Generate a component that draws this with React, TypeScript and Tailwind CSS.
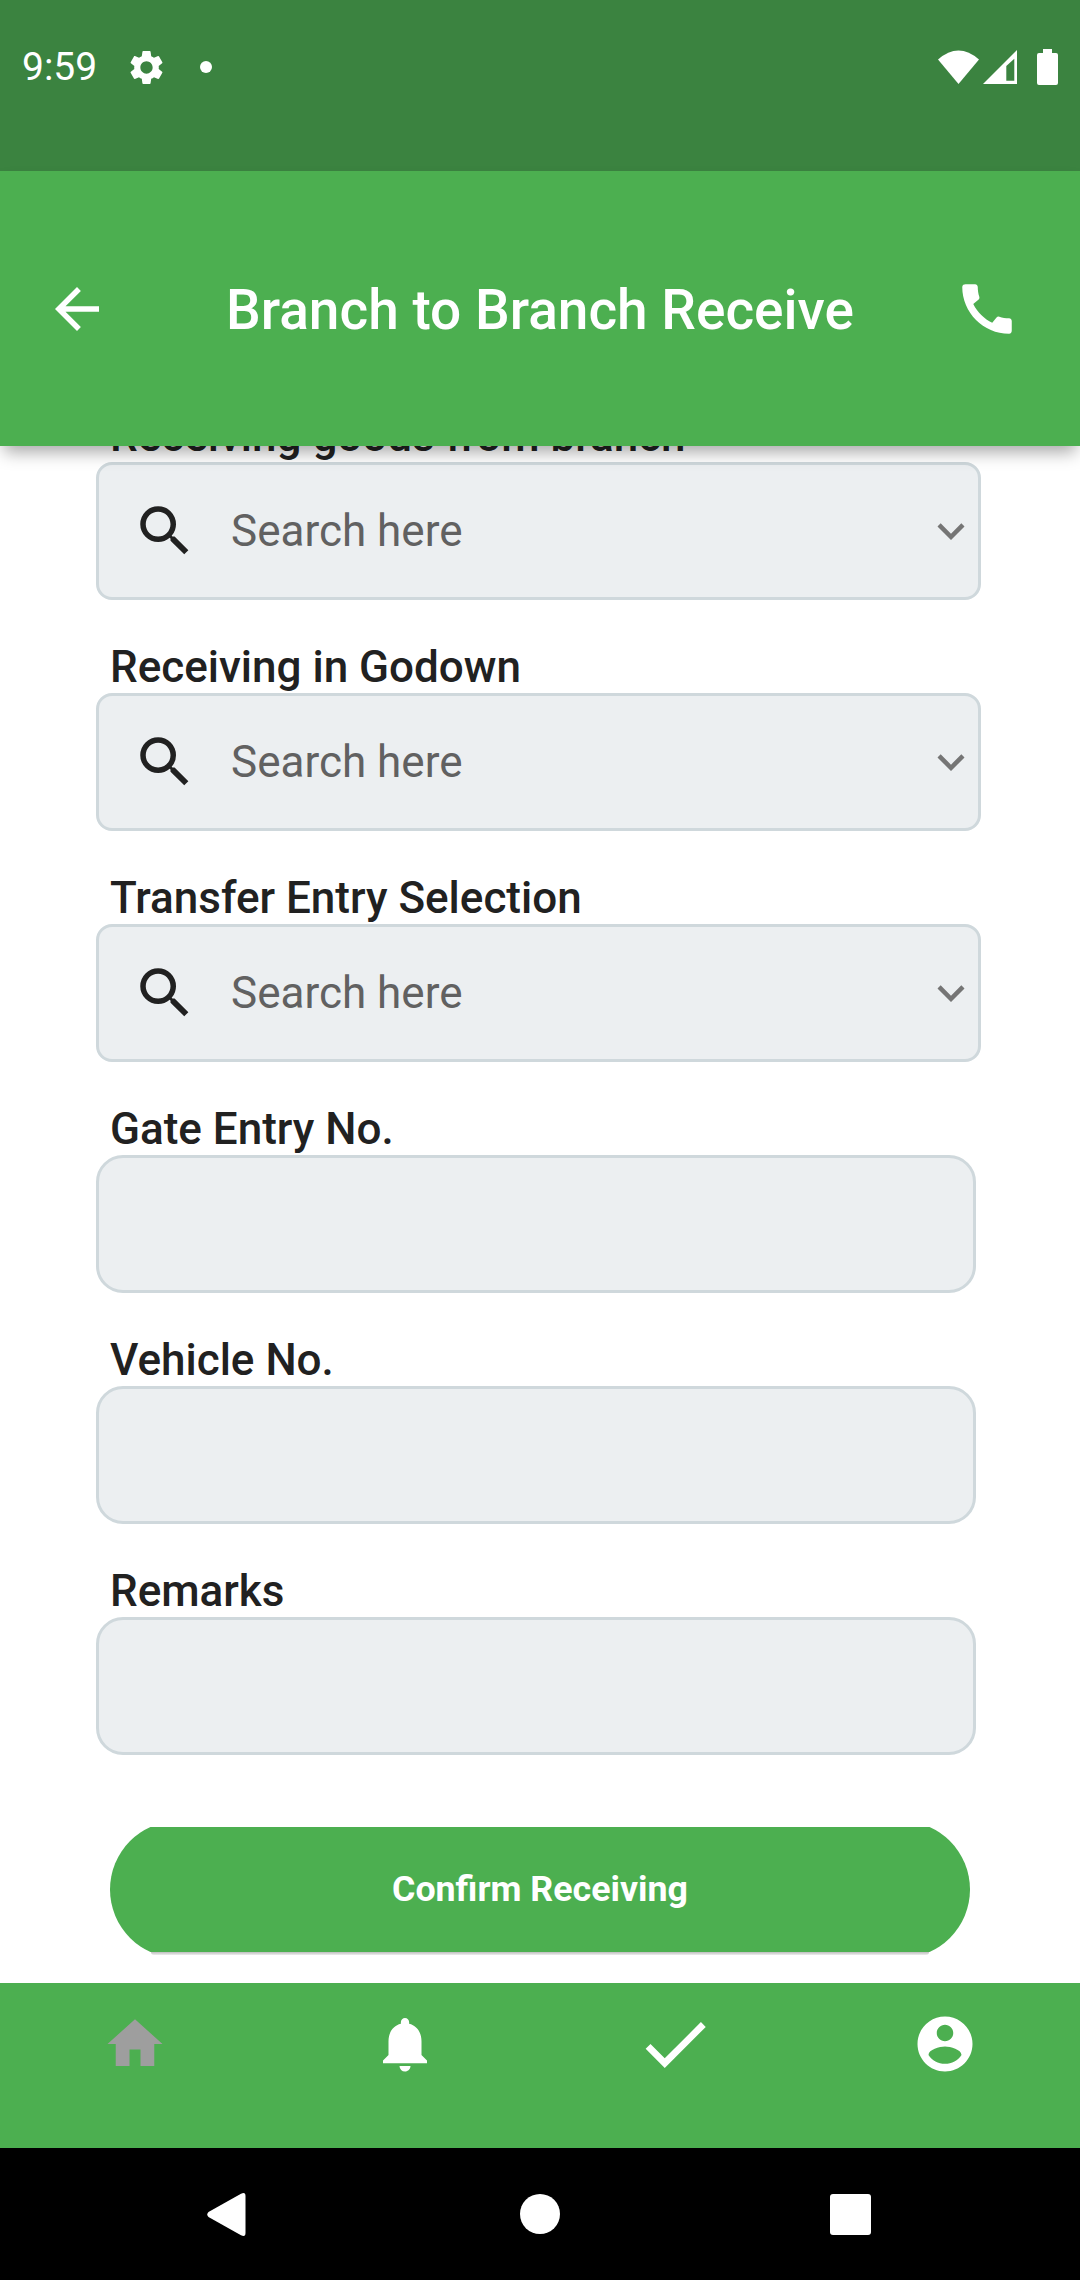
import {
  MdArrowBack,
  MdCall,
  MdCheck,
  MdHome,
  MdKeyboardArrowDown,
  MdNotifications,
  MdSearch,
  MdSettings,
} from "react-icons/md"

function SelectField({ label }: { label: string }) {
  return (
    <div>
      <div className="ml-[110px] h-[52px] text-[44px] leading-[52px] font-medium text-[#212121]">
        {label}
      </div>
      <div className="ml-[96px] mr-[99px] flex h-[138px] items-center rounded-[16px] border-[3px] border-[#cfd8dc] bg-[#eceff1]">
        <MdSearch size={66} className="ml-[33px] text-[#212121]" />
        <span className="ml-[33px] flex-1 text-[44px] text-[#616161]">Search here</span>
        <MdKeyboardArrowDown size={54} className="text-[#757575]" />
      </div>
    </div>
  )
}

function TextField({ label }: { label: string }) {
  return (
    <div>
      <div className="ml-[110px] h-[52px] text-[44px] leading-[52px] font-medium text-[#212121]">
        {label}
      </div>
      <div className="ml-[96px] mr-[104px] h-[138px] rounded-[27px] border-[3px] border-[#cfd8dc] bg-[#eceff1]" />
    </div>
  )
}

export default function App() {
  return (
    <div className="flex h-[2280px] w-full flex-col overflow-hidden bg-white font-['Roboto',sans-serif]">
      {/* status bar */}
      <div className="flex h-[171px] shrink-0 items-center justify-between bg-[#3b8340] pb-[37px] pl-[22px] pr-[22px] text-white">
        <div className="flex items-center">
          <span className="text-[39px] leading-none">9:59</span>
          <MdSettings size={41} className="ml-[29px]" />
          <span className="ml-[33px] h-[12px] w-[12px] rounded-full bg-white" />
        </div>
        <div className="flex items-center">
          <svg width="41" height="34" viewBox="0 0 41 34" fill="white">
            <path d="M20.5 34L0 9.5Q20.5-8.5 41 9.5Z" />
          </svg>
          <svg width="34" height="34" viewBox="0 0 34 34" fill="white" fillRule="evenodd" className="ml-[4px]">
            <path d="M0 34L34 0V34ZM23.3 16V30.7H31.3V8.7Z" />
          </svg>
          <svg width="21" height="36" viewBox="0 0 21 36" fill="white" className="ml-[20px]">
            <path d="M6 0H15V4H19Q21 4 21 6V34Q21 36 19 36H2Q0 36 0 34V6Q0 4 2 4H6Z" />
          </svg>
        </div>
      </div>

      {/* app bar */}
      <div className="relative z-10 grid h-[275px] shrink-0 grid-cols-[126px_1fr_126px] items-center bg-[#4caf50] text-white shadow-[0_10px_16px_-4px_rgba(0,0,0,0.35)]">
        <MdArrowBack size={66} className="ml-[44px]" />
        <div className="pt-[3px] text-center text-[55px] font-medium">Branch to Branch Receive</div>
        <MdCall size={66} className="mr-[60px] justify-self-end" />
      </div>

      {/* form */}
      <div className="min-h-0 flex-1 overflow-hidden">
        <div className="mt-[-36px] flex flex-col gap-[41px]">
          <SelectField label="Receiving goods from branch" />
          <SelectField label="Receiving in Godown" />
          <SelectField label="Transfer Entry Selection" />
          <TextField label="Gate Entry No." />
          <TextField label="Vehicle No." />
          <TextField label="Remarks" />
        </div>
        <div className="mx-[110px] mt-[72px]">
          <div className="h-[125px] overflow-hidden">
            <div className="mt-[-6px] flex h-[137px] items-center justify-center rounded-full bg-[#4caf50] text-[35.75px] font-bold text-white">
              Confirm Receiving
            </div>
          </div>
          <div className="mx-[41px] h-[3px] rounded-b-[3px] bg-gradient-to-b from-[#bdbdbd] to-[#eeeeee]" />
        </div>
      </div>

      {/* bottom tabs */}
      <div className="grid h-[165px] shrink-0 grid-cols-4 items-center justify-items-center bg-[#4caf50] pb-[43px] text-white">
        <MdHome size={66} className="text-[#9e9e9e]" />
        <MdNotifications size={66} />
        <MdCheck size={82} />
        <svg width="66" height="66" viewBox="0 0 24 24" fill="white">
          <path d="M12 2C6.48 2 2 6.48 2 12s4.48 10 10 10 10-4.48 10-10S17.52 2 12 2zm0 3c1.66 0 3 1.34 3 3s-1.34 3-3 3-3-1.34-3-3 1.34-3 3-3zm0 14.2c-2.5 0-4.71-1.28-6-3.22.03-1.99 4-3.08 6-3.08 1.99 0 5.97 1.09 6 3.08-1.29 1.94-3.5 3.22-6 3.22z" />
        </svg>
      </div>

      {/* android nav */}
      <div className="flex h-[132px] shrink-0 items-center bg-black pl-[207px]">
        <svg width="39" height="43" viewBox="0 0 39 43" fill="white">
          <path d="M34 .8Q38.5-1.5 38.5 3V40Q38.5 44.5 34 42.2L1.5 24Q-1 21.5 1.5 19Z" />
        </svg>
        <span className="ml-[274px] h-[40px] w-[40px] rounded-full bg-white" />
        <span className="ml-[270px] h-[41px] w-[41px] rounded-[3px] bg-white" />
      </div>
    </div>
  )
}
